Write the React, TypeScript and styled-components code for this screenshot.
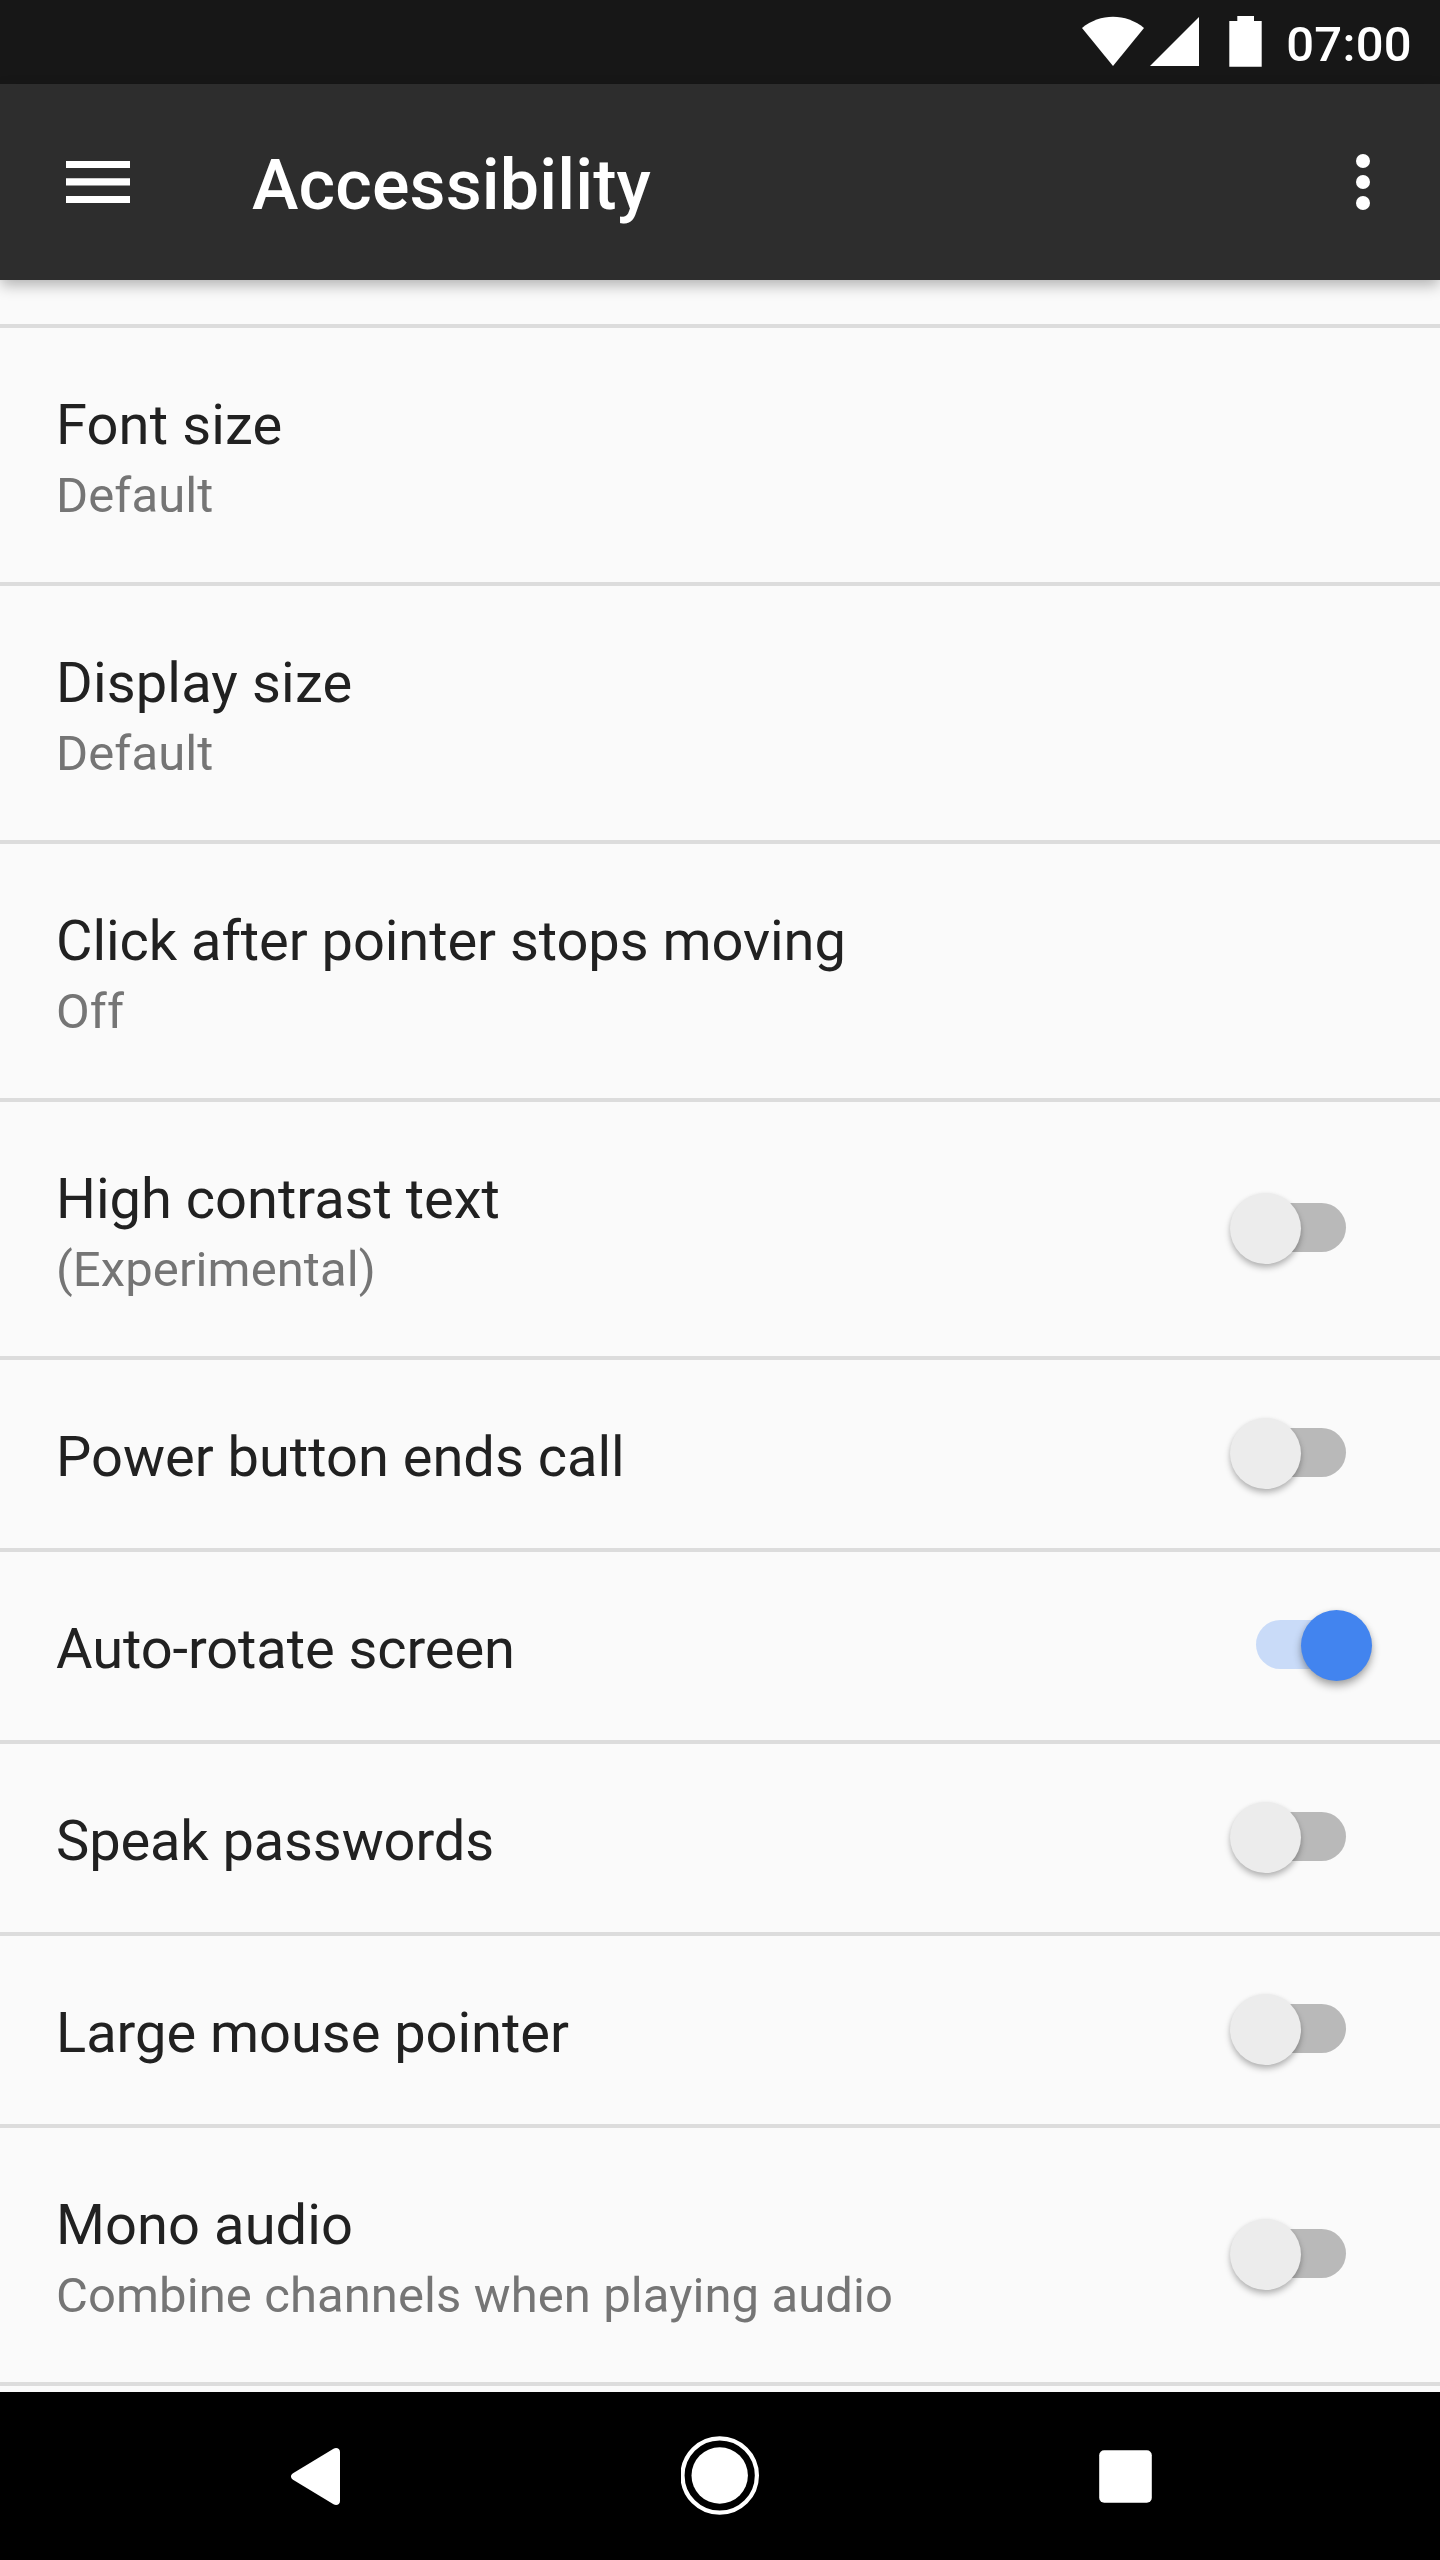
import React from "react";
import styled, { createGlobalStyle } from "styled-components";

const GlobalStyle = createGlobalStyle`
  * { box-sizing: border-box; }
  body { margin: 0; background: #fafafa; font-family: Roboto, "Noto Sans", sans-serif; }
`;

const Screen = styled.div`
  display: flex;
  flex-direction: column;
  width: 1440px;
  height: 2560px;
  overflow: hidden;
  background: #fafafa;
`;

const StatusBar = styled.div`
  display: flex;
  flex: none;
  align-items: flex-start;
  height: 84px;
  padding: 16px 28px 0 0;
  justify-content: flex-end;
  background: #171717;
  color: #fff;
`;

const StatusIcons = styled.svg`
  display: block;
  width: 180px;
  height: 52px;
  margin-right: 24px;
`;

const Clock = styled.div`
  font-size: 49px;
  font-weight: 500;
  line-height: 57px;
  letter-spacing: 0.3px;
`;

const Toolbar = styled.header`
  display: flex;
  flex: none;
  align-items: center;
  height: 196px;
  padding: 0 70px 0 66px;
  background: #2d2d2d;
  color: #fff;
  z-index: 1;
  box-shadow: 0 6px 14px -1px rgba(0, 0, 0, 0.3);
`;

const MenuIcon = styled.svg`
  display: block;
  width: 64px;
  height: 42px;
`;

const MoreIcon = styled.svg`
  display: block;
  width: 14px;
  height: 56px;
`;

const Title = styled.h1`
  flex: 1;
  margin: 0;
  padding: 6px 0 0 122px;
  font-size: 70px;
  font-weight: 500;
  line-height: 82px;
  letter-spacing: 0.13px;
`;

const List = styled.main`
  flex: 1;
  min-height: 0;
  padding-top: 44px;
  overflow: hidden;
`;

const Row = styled.div<{ $tall: boolean }>`
  display: flex;
  justify-content: space-between;
  align-items: center;
  height: ${(p) => (p.$tall ? 258 : 192)}px;
  padding: 0 68px 0 56px;
  border-top: 4px solid #dcdcdc;
`;

const EndDivider = styled.div`
  height: 4px;
  background: #dcdcdc;
`;

const Labels = styled.div`
  padding-top: 6px;
`;

const Name = styled.div<{ $tracking: number }>`
  font-size: 56px;
  line-height: 66px;
  letter-spacing: ${(p) => p.$tracking}px;
  color: #212121;
`;

const Summary = styled.div`
  margin-top: 9px;
  margin-bottom: -1px;
  font-size: 49px;
  line-height: 58px;
  letter-spacing: 0.09px;
  color: #757575;
`;

const Track = styled.div<{ $on: boolean }>`
  display: flex;
  align-items: center;
  justify-content: ${(p) => (p.$on ? "flex-end" : "flex-start")};
  width: 90px;
  height: 49px;
  margin: 0 26px 3px 0;
  border-radius: 25px;
  background: ${(p) => (p.$on ? "#c9dbf8" : "#b9b9b9")};
`;

const Thumb = styled.div<{ $on: boolean }>`
  flex: none;
  width: 71px;
  height: 71px;
  margin: 2px -26px 0;
  border-radius: 50%;
  background: ${(p) => (p.$on ? "#4284ef" : "#ececec")};
  box-shadow: ${(p) =>
    p.$on
      ? "0 5px 8px rgba(0, 0, 0, 0.32), 0 1px 5px rgba(0, 0, 0, 0.08)"
      : "0 4px 6px rgba(0, 0, 0, 0.26), 0 1px 4px rgba(0, 0, 0, 0.06)"};
`;

const NavBar = styled.nav`
  display: flex;
  flex: none;
  justify-content: space-between;
  align-items: center;
  height: 168px;
  padding: 0 274px 0 276px;
  background: #000;
`;

const NavIcon = styled.svg`
  display: block;
  width: 80px;
  height: 80px;
  fill: #fff;
`;

type Setting = { name: string; summary?: string; on?: boolean; tracking?: number };

const settings: Setting[] = [
  { name: "Font size", summary: "Default", tracking: 0.15 },
  { name: "Display size", summary: "Default", tracking: 0.16 },
  { name: "Click after pointer stops moving", summary: "Off", tracking: -0.05 },
  { name: "High contrast text", summary: "(Experimental)", on: false },
  { name: "Power button ends call", on: false },
  { name: "Auto-rotate screen", on: true, tracking: -0.08 },
  { name: "Speak passwords", on: false, tracking: -0.12 },
  { name: "Large mouse pointer", on: false, tracking: -0.03 },
  { name: "Mono audio", summary: "Combine channels when playing audio", on: false, tracking: 0.1 },
];

function Switch({ on }: { on: boolean }) {
  return (
    <Track $on={on} role="switch" aria-checked={on}>
      <Thumb $on={on} />
    </Track>
  );
}

export default function App() {
  return (
    <Screen>
      <GlobalStyle />
      <StatusBar>
        <StatusIcons viewBox="0 0 180 52" fill="#fff">
          <path d="M0 12C18-3 44-3 62 12L31 50Z" />
          <path d="M68 50H117V1Z" />
          <path d="M155.300 0H172V5H179.700V50.700H147.300V5H155.300Z" />
        </StatusIcons>
        <Clock>07:00</Clock>
      </StatusBar>
      <Toolbar>
        <MenuIcon viewBox="0 0 64 42" fill="#fff">
          <path d="M0 0H64V7H0ZM0 17.300H64V24.500H0ZM0 35H64V42H0Z" />
        </MenuIcon>
        <Title>Accessibility</Title>
        <MoreIcon viewBox="0 0 14 56" fill="#fff">
          <circle cx="7" cy="7" r="7" />
          <circle cx="7" cy="28" r="7" />
          <circle cx="7" cy="49" r="7" />
        </MoreIcon>
      </Toolbar>
      <List>
        {settings.map((s) => (
          <Row key={s.name} $tall={!!s.summary}>
            <Labels>
              <Name $tracking={s.tracking ?? 0}>{s.name}</Name>
              {s.summary && <Summary>{s.summary}</Summary>}
            </Labels>
            {s.on !== undefined && <Switch on={s.on} />}
          </Row>
        ))}
        <EndDivider />
      </List>
      <NavBar>
        <NavIcon viewBox="0 0 80 80">
          <path d="M17 37.300L57.500 12.700C60.500 11 64 12.500 64 16V65C64 68.500 60.500 70 57.500 68.300L17 43.700C14.300 42 14.300 39 17 37.300Z" />
        </NavIcon>
        <NavIcon viewBox="0 0 80 80">
          <circle cx="38.700" cy="39.500" r="28.200" />
          <circle cx="38.700" cy="39.500" r="37.200" fill="none" stroke="#fff" strokeWidth="4.200" />
        </NavIcon>
        <NavIcon viewBox="0 0 80 80">
          <rect x="13.200" y="14.200" width="52.600" height="52.600" rx="5" />
        </NavIcon>
      </NavBar>
    </Screen>
  );
}
